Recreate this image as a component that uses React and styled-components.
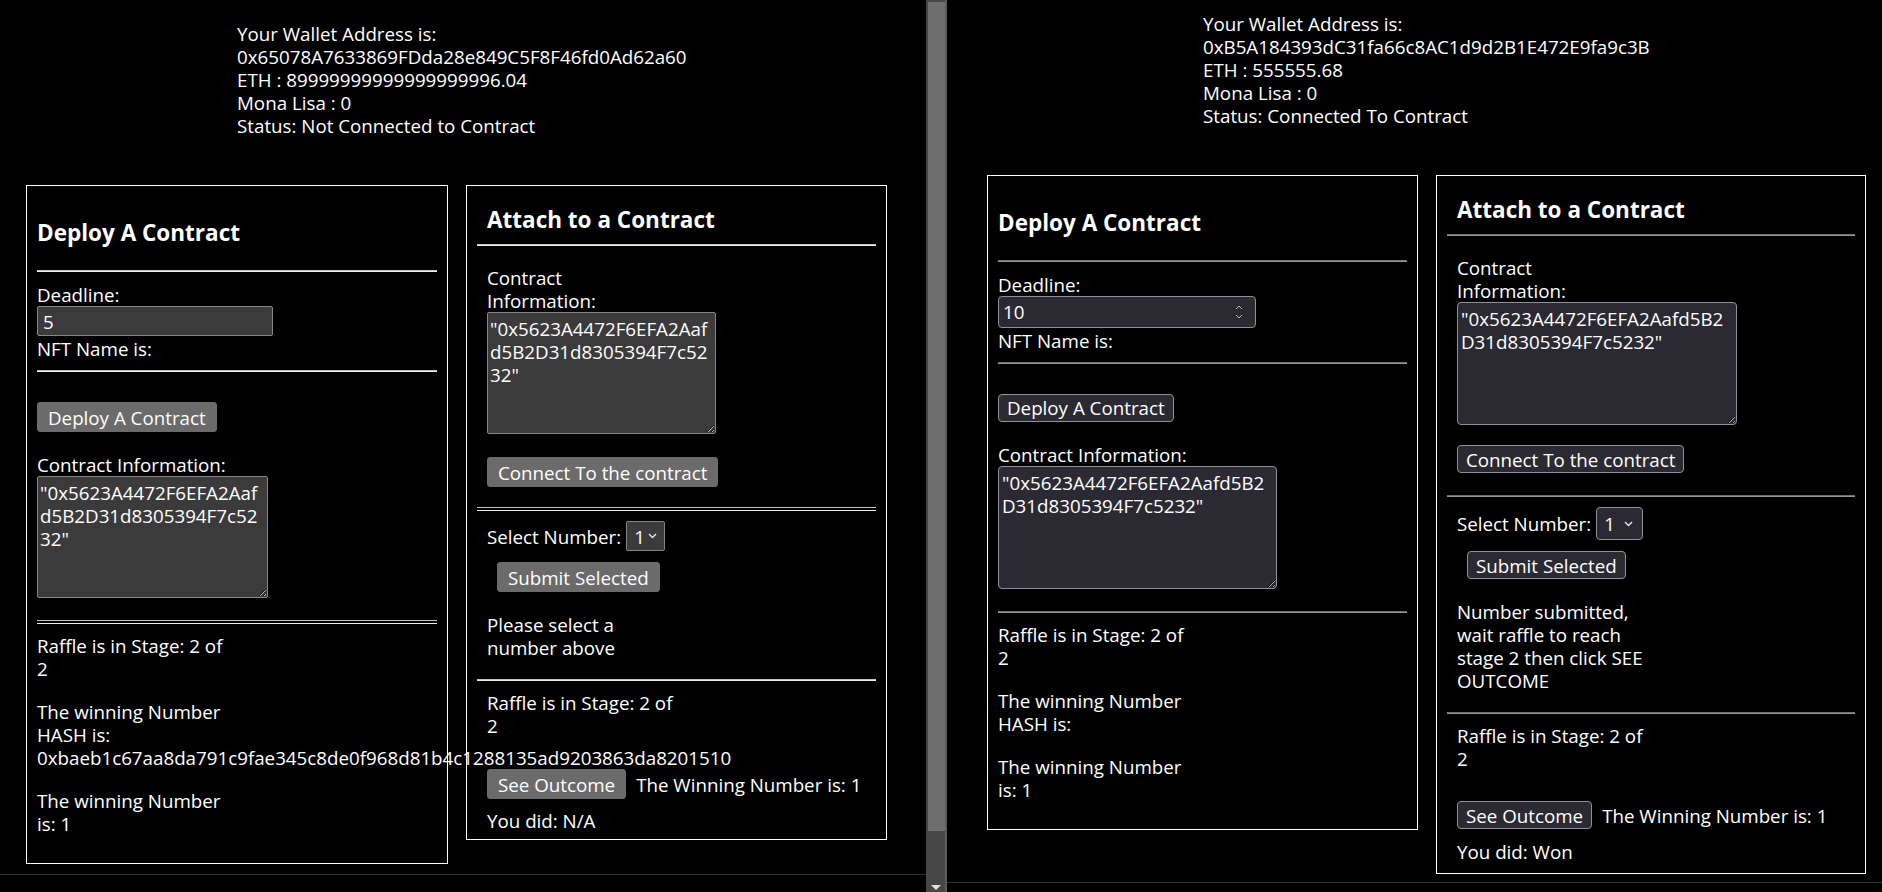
import React from 'react';
import styled, { createGlobalStyle, ThemeProvider } from 'styled-components';

const GlobalStyle = createGlobalStyle`
  html, body {
    margin: 0;
    padding: 0;
    background: #000;
  }
  body {
    color: #fff;
    font-family: 'Open Sans', 'Noto Sans', sans-serif;
    font-size: 18.75px;
    line-height: 23px;
    color-scheme: dark;
  }
`;

// two browser windows side by side: chromium on the left, firefox on the right
const chrome = {
  width: 926,
  viewH: 874,
  headTop: 22,
  headLeft: 237,
  sideLeft: 26,
  deployW: 422,
  attachW: 421,
  ctlBg: '#3b3b3b',
  ctlBorder: '#858585',
  ctlRadius: 2,
  btnBg: '#6b6b6b',
  btnBorder: '#6b6b6b',
  btnRadius: 3,
  btnH: 30,
  btnPad: 10,
  inputW: 236,
  inputH: 30,
  inputPad: 5,
  areaW: 231,
  attachAreaW: 229,
  areaH: 122,
  areaPad: '4px 2px',
  selectW: 39,
  selectH: 30,
  chevRight: 7,
  connectGap: 23,
  selectRuleGap: 20,
  outcomeGap: 32,
  bottomPad: 7,
  ruleTop: '#c4c4c4',
  ruleBottom: '#ececec',
  doubleRule: true,
};

const firefox = {
  width: 935,
  viewH: 882,
  headTop: 12,
  headLeft: 256,
  sideLeft: 40,
  deployW: 431,
  attachW: 430,
  ctlBg: '#2b2a33',
  ctlBorder: '#8f8f9d',
  ctlRadius: 4,
  btnBg: '#2b2a33',
  btnBorder: '#8f8f9d',
  btnRadius: 4,
  btnH: 28,
  btnPad: 8,
  inputW: 258,
  inputH: 31.5,
  inputPad: 4,
  areaW: 279,
  attachAreaW: 280,
  areaH: 123,
  areaPad: '4px 3px',
  selectW: 47,
  selectH: 33,
  chevRight: 9,
  connectGap: 20,
  selectRuleGap: 22,
  outcomeGap: 30,
  bottomPad: 10,
  ruleTop: '#6f6f6f',
  ruleBottom: '#979797',
  doubleRule: false,
};

const Screen = styled.div`
  display: flex;
  height: 892px;
  overflow: hidden;
  background: #000;
`;

const Window = styled.div`
  width: ${(p) => p.theme.width}px;
  flex-shrink: 0;
  display: flex;
  flex-direction: column;
`;

const Viewport = styled.div`
  height: ${(p) => p.theme.viewH}px;
  box-sizing: border-box;
  padding-top: ${(p) => p.theme.headTop}px;
  overflow: hidden;
`;

const StatusStrip = styled.div`
  flex: 1;
  border-top: 1px solid #2f2f2f;
`;

const Wallet = styled.div`
  padding-left: ${(p) => p.theme.headLeft}px;
  white-space: nowrap;
`;

const Cards = styled.div`
  display: flex;
  align-items: flex-start;
  gap: 18px;
  margin-top: 48px;
  padding-left: ${(p) => p.theme.sideLeft}px;
`;

const Card = styled.section`
  flex-shrink: 0;
  width: ${(p) => p.$w}px;
  box-sizing: border-box;
  border: 1px solid #fff;
  padding: 0 10px ${(p) => p.$pb}px;
`;

const Inset = styled.div`
  padding: 0 10px;
`;

const Heading = styled.h3`
  margin: ${(p) => p.$mt}px 0 0;
  font-size: 22.5px;
  line-height: 27px;
  font-weight: 700;
  white-space: nowrap;
`;

const Rule = styled.hr`
  margin: ${(p) => p.$mt}px 0 0;
  height: ${(p) => (p.$double ? 2 : 0)}px;
  border: 0;
  border-top: 1px solid ${(p) => p.theme.ruleTop};
  border-bottom: 1px solid ${(p) => p.theme.ruleBottom};
  background: #000;
`;

const Text = styled.p`
  margin: ${(p) => p.$mt}px 0 0;
  white-space: nowrap;
`;

const Button = styled.button`
  display: block;
  margin: ${(p) => p.$mt || 0}px 0 0 ${(p) => p.$indent || 0}px;
  height: ${(p) => p.theme.btnH}px;
  padding: 0 ${(p) => p.theme.btnPad}px;
  background: ${(p) => p.theme.btnBg};
  border: 1px solid ${(p) => p.theme.btnBorder};
  border-radius: ${(p) => p.theme.btnRadius}px;
  color: #fff;
  font: inherit;
  line-height: 23px;
  white-space: nowrap;
`;

const NumberBox = styled.div`
  display: flex;
  align-items: center;
  width: ${(p) => p.theme.inputW}px;
  height: ${(p) => p.theme.inputH}px;
  box-sizing: border-box;
  padding: 0 12px 0 ${(p) => p.theme.inputPad}px;
  background: ${(p) => p.theme.ctlBg};
  border: 1px solid ${(p) => p.theme.ctlBorder};
  border-radius: ${(p) => p.theme.ctlRadius}px;
`;

const NumberInput = styled.input`
  flex: 1;
  min-width: 0;
  padding: 0;
  border: 0;
  outline: none;
  background: transparent;
  color: #fff;
  font: inherit;
  line-height: 23px;
`;

const InfoArea = styled.textarea`
  display: block;
  margin: 0;
  width: ${(p) => p.$w}px;
  height: ${(p) => p.theme.areaH}px;
  box-sizing: border-box;
  padding: ${(p) => p.theme.areaPad};
  background: ${(p) => p.theme.ctlBg};
  border: 1px solid ${(p) => p.theme.ctlBorder};
  border-radius: ${(p) => p.theme.ctlRadius}px;
  color: #fff;
  font: inherit;
  line-height: 23px;
  white-space: pre;
  overflow: hidden;
`;

const SelectRow = styled.div`
  display: flex;
  align-items: center;
  gap: 5px;
  height: ${(p) => p.theme.selectH}px;
  margin-top: ${(p) => p.$mt}px;
  white-space: nowrap;
`;

const SelectBox = styled.div`
  display: flex;
  align-items: center;
  width: ${(p) => p.theme.selectW}px;
  height: 100%;
  box-sizing: border-box;
  padding: 0 ${(p) => p.theme.chevRight}px 0 7px;
  background: ${(p) => p.theme.ctlBg};
  border: 1px solid ${(p) => p.theme.ctlBorder};
  border-radius: ${(p) => p.theme.ctlRadius}px;

  svg {
    margin-left: auto;
  }
`;

const OutcomeRow = styled.div`
  display: flex;
  align-items: center;
  gap: 10px;
  height: 30px;
  margin-top: ${(p) => p.$mt}px;
  white-space: nowrap;
`;

const ScrollTrack = styled.div`
  width: 19px;
  flex-shrink: 0;
  display: flex;
  flex-direction: column;
  align-items: flex-start;
  background: #474747;
  border-right: 2px solid #5c5c5c;
`;

const ScrollThumb = styled.div`
  width: 17px;
  height: 829px;
  margin: 2px 0 0 2px;
  background: #6e6e6e;
`;

const ScrollArrow = styled.svg`
  margin: auto 0 2px 5px;
`;

const Chevron = () => (
  <svg width="9" height="6" viewBox="0 0 9 6">
    <path d="M1 1 L4.5 4.6 L8 1" fill="none" stroke="#e6e6e6" strokeWidth="1.4" />
  </svg>
);

const Spinner = () => (
  <svg width="8" height="16" viewBox="0 0 8 16">
    <path d="M1 5 L4 2 L7 5" fill="none" stroke="#b9b9c2" strokeWidth="1" />
    <path d="M1 11 L4 14 L7 11" fill="none" stroke="#b9b9c2" strokeWidth="1" />
  </svg>
);

const lines = (list) =>
  list.map((line, i) => (
    <React.Fragment key={i}>
      {i > 0 && <br />}
      {line}
    </React.Fragment>
  ));

const HASH = '0xbaeb1c67aa8da791c9fae345c8de0f968d81b4c1288135ad9203863da8201510';

const windows = [
  {
    id: 'chrome',
    theme: chrome,
    wallet: '0x65078A7633869FDda28e849C5F8F46fd0Ad62a60',
    eth: '8' + '9'.repeat(18) + '6.04',
    status: 'Not Connected to Contract',
    deadline: '5',
    spinner: false,
    info: '"0x5623A4472F6EFA2Aaf\nd5B2D31d8305394F7c52\n32"',
    hash: HASH,
    message: ['Please select a', 'number above'],
    result: 'N/A',
  },
  {
    id: 'firefox',
    theme: firefox,
    wallet: '0xB5A184393dC31fa66c8AC1d9d2B1E472E9fa9c3B',
    eth: '555555.68',
    status: 'Connected To Contract',
    deadline: '10',
    spinner: true,
    info: '"0x5623A4472F6EFA2Aafd5B2\nD31d8305394F7c5232"',
    hash: '',
    message: ['Number submitted,', 'wait raffle to reach', 'stage 2 then click SEE', 'OUTCOME'],
    result: 'Won',
  },
];

function DeployCard({ data }) {
  const t = data.theme;
  const hashLines = ['The winning Number', 'HASH is:'];
  if (data.hash) hashLines.push(data.hash);

  return (
    <Card $w={t.deployW} $pb={28}>
      <Heading $mt={33}>Deploy A Contract</Heading>
      <Rule $mt={24} />
      <Text $mt={11}>Deadline:</Text>
      <NumberBox>
        <NumberInput type="text" readOnly value={data.deadline} />
        {data.spinner && <Spinner />}
      </NumberBox>
      <Text $mt={1}>NFT Name is:</Text>
      <Rule $mt={10} />
      <Button $mt={30}>Deploy A Contract</Button>
      <Text $mt={21}>Contract Information:</Text>
      <InfoArea readOnly wrap="off" $w={t.areaW} value={data.info} />
      <Rule $mt={22} $double={t.doubleRule} />
      <Text $mt={10}>{lines(['Raffle is in Stage: 2 of', '2'])}</Text>
      <Text $mt={20}>{lines(hashLines)}</Text>
      <Text $mt={20}>{lines(['The winning Number', 'is: 1'])}</Text>
    </Card>
  );
}

function AttachCard({ data }) {
  const t = data.theme;

  return (
    <Card $w={t.attachW} $pb={t.bottomPad}>
      <Inset>
        <Heading $mt={20}>Attach to a Contract</Heading>
      </Inset>
      <Rule $mt={11} />
      <Inset>
        <Text $mt={20}>{lines(['Contract', 'Information:'])}</Text>
        <InfoArea readOnly wrap="off" $w={t.attachAreaW} value={data.info} />
        <Button $mt={t.connectGap}>Connect To the contract</Button>
      </Inset>
      <Rule $mt={t.selectRuleGap} $double={t.doubleRule} />
      <Inset>
        <SelectRow $mt={10}>
          <span>Select Number:</span>
          <SelectBox>
            <span>1</span>
            <Chevron />
          </SelectBox>
        </SelectRow>
        <Button $mt={11} $indent={10}>Submit Selected</Button>
        <Text $mt={21}>{lines(data.message)}</Text>
      </Inset>
      <Rule $mt={20} />
      <Inset>
        <Text $mt={10}>{lines(['Raffle is in Stage: 2 of', '2'])}</Text>
        <OutcomeRow $mt={t.outcomeGap}>
          <Button>See Outcome</Button>
          <span>The Winning Number is: 1</span>
        </OutcomeRow>
        <Text $mt={10}>You did: {data.result}</Text>
      </Inset>
    </Card>
  );
}

function BrowserPane({ data }) {
  return (
    <ThemeProvider theme={data.theme}>
      <Window>
        <Viewport>
          <Wallet>
            {lines([
              'Your Wallet Address is:',
              data.wallet,
              `ETH : ${data.eth}`,
              'Mona Lisa : 0',
              `Status: ${data.status}`,
            ])}
          </Wallet>
          <Cards>
            <DeployCard data={data} />
            <AttachCard data={data} />
          </Cards>
        </Viewport>
        <StatusStrip />
      </Window>
    </ThemeProvider>
  );
}

export default function App() {
  const [left, right] = windows;

  return (
    <>
      <GlobalStyle />
      <Screen>
        <BrowserPane data={left} />
        <ScrollTrack>
          <ScrollThumb />
          <ScrollArrow width="10" height="5" viewBox="0 0 10 5">
            <path d="M0 0 L10 0 L5 5 Z" fill="#e0e0e0" />
          </ScrollArrow>
        </ScrollTrack>
        <BrowserPane data={right} />
      </Screen>
    </>
  );
}
